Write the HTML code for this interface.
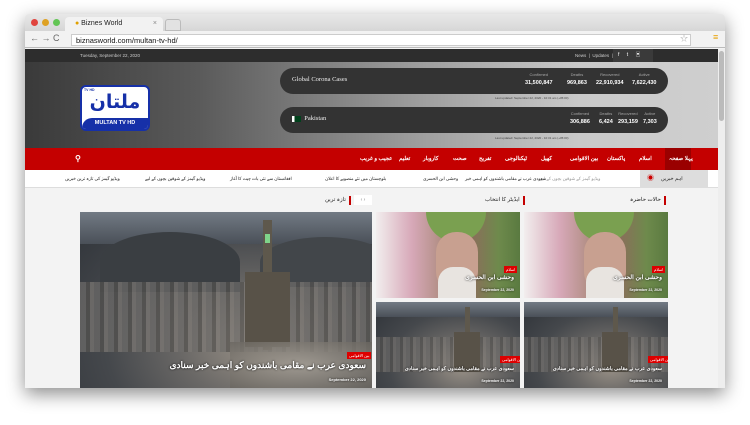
<!DOCTYPE html>
<html><head><meta charset="utf-8"><style>
*{margin:0;padding:0;box-sizing:border-box}
body{width:750px;height:425px;background:#fff;font-family:"Liberation Sans","Noto Sans CJK SC",sans-serif;position:relative;overflow:hidden}
span,div{white-space:nowrap}
.win{position:absolute;left:25px;top:14px;width:700px;height:374px;background:#f3f3f3;box-shadow:0 6px 18px rgba(0,0,0,.45);border-radius:4px 4px 0 0;overflow:hidden}
.tabs{position:absolute;left:0;top:0;width:700px;height:17px;background:linear-gradient(#e8e8e8,#d6d6d6)}
.dot{position:absolute;top:5px;width:7px;height:7px;border-radius:50%}
.tab{position:absolute;left:40px;top:3px;width:98px;height:14px;background:#f2f2f2;border-radius:4px 4px 0 0;font-size:7px;line-height:14px;padding-left:10px;color:#222}
.addr{position:absolute;left:0;top:17px;width:700px;height:17px;background:#f2f2f2;border-bottom:1px solid #bbb}
.url{position:absolute;left:46px;top:3px;width:620px;height:12px;background:#fff;border:1px solid #ccc;font-size:7.5px;line-height:11px;padding-left:4px;color:#111}
.page{position:absolute;left:0;top:35px;width:693px;height:339px;background:#f3f3f3}
.sb{position:absolute;right:0;top:35px;width:7px;height:339px;background:#eee}
.sb i{position:absolute;left:1px;top:2px;width:5px;height:70px;background:#bbb;border-radius:3px}
.topbar{position:absolute;left:0;top:0;width:693px;height:13px;background:#2d2d2d;color:#ccc;font-size:4.5px;line-height:13px}
.hdr{position:absolute;left:0;top:13px;width:693px;height:86px;background:linear-gradient(90deg,#3a3a3a 0%,#5a5a5a 25%,#9a9a9a 55%,#c9c9c9 80%,#cfcfcf 100%)}
.logo{position:absolute;left:55px;top:23px;width:70px;height:46px;background:#fff;border:2px solid #1630a8;border-radius:6px;overflow:hidden}
.cb{position:absolute;left:255px;width:388px;height:26px;background:#333;border-radius:13px;color:#eee}
.cb .t{position:absolute;left:12px;top:8px;font-family:"Liberation Serif",serif;font-size:6.5px}
.st{position:absolute;top:4px;text-align:center;font-size:4px;color:#aaa}
.st b{display:block;color:#fff;font-size:5.5px;margin-top:3px}
.nav{position:absolute;left:0;top:99px;width:693px;height:22px;background:#c40000}
.nav span{position:absolute;top:0;line-height:22px;color:#fff;font-size:5.5px;font-weight:bold}
.tick{position:absolute;left:0;top:121px;width:693px;height:18px;background:#fff;border-bottom:1px solid #ddd}
.tick span{position:absolute;top:0;line-height:18px;font-size:4.3px;color:#222}
.sec{position:absolute;top:147px;font-size:5.5px;color:#222;border-right:2px solid #c40000;padding-right:3px;line-height:9px}
.img{position:absolute;overflow:hidden}
.mec{background:radial-gradient(ellipse at 60% 75%,#9a9288 0%,#6a6866 30%,#45484c 60%,#2e3238 100%)}
.mec:before{content:"";position:absolute;left:0;top:0;right:0;height:18%;background:linear-gradient(#727a84,#4a5058)}
.mtn{position:absolute;background:#3a3e42;border-radius:50% 50% 0 0}
.tower{position:absolute;background:#5e584c}
.por{background:linear-gradient(90deg,#f2eeee 0%,#d7a8b8 25%,#a88878 50%,#8c6c5c 65%,#6e8a4c 85%,#5a7a40 100%)}
.cap{position:absolute;right:6px;color:#fff;font-weight:bold;text-align:right;text-shadow:0 0 2px #000}
.tag{position:absolute;background:#d00;color:#fff;font-size:4px;padding:1px 2px}
</style></head><body>
<div class="win">
 <div class="tabs">
  <div class="dot" style="left:6px;background:#e0443e"></div>
  <div class="dot" style="left:17px;background:#dea123"></div>
  <div class="dot" style="left:28px;background:#62c554"></div>
  <div class="tab"><span style="color:#e0a000">●</span> Biznes World <span style="position:absolute;right:6px;color:#888">×</span></div>
  <div style="position:absolute;left:140px;top:5px;width:16px;height:12px;background:#e2e2e2;border:1px solid #bbb;border-radius:3px 3px 0 0"></div>
 </div>
 <div class="addr">
  <span style="position:absolute;left:5px;top:2px;font-size:9px;color:#666">← → C</span>
  <div class="url">biznasworld.com/multan-tv-hd/</div>
  <span style="position:absolute;left:655px;top:2px;font-size:8px;color:#aaa">☆</span>
  <span style="position:absolute;left:688px;top:1px;font-size:9px;color:#e8a000">≡</span>
 </div>
 <div class="page">
  <div class="topbar"><span style="position:absolute;left:55px">Tuesday, September 22, 2020</span>
   <span style="position:absolute;left:550px">News &nbsp;| &nbsp;Updates &nbsp;| &nbsp;Help</span>
   <div style="position:absolute;left:588px;top:0;width:40px;height:13px;background:#3a3a3a;color:#fff;font-size:5px;word-spacing:6px;padding-left:5px">f t ▣</div>
  </div>
  <div class="hdr">
   <div class="logo">
    <div style="position:absolute;left:0;top:0;width:66px;height:31px;text-align:center;color:#1630a8;font-size:19px;font-weight:bold;line-height:30px;font-family:'DejaVu Sans',sans-serif">ملتان</div>
    <div style="position:absolute;left:2px;top:1px;font-size:3.5px;color:#1630a8;font-weight:bold">TV HD</div>
    <div style="position:absolute;left:0;bottom:0;width:66px;height:11px;background:#1630a8;color:#fff;font-size:5.5px;font-weight:bold;text-align:center;line-height:11px;border-radius:10px 0 0 0">MULTAN TV HD</div>
   </div>
   <div class="cb" style="top:6px"><div class="t">Global Corona Cases</div>
    <div class="st" style="left:245px">Confirmed<b>31,500,847</b></div>
    <div class="st" style="left:287px">Deaths<b>969,863</b></div>
    <div class="st" style="left:316px">Recovered<b>22,910,934</b></div>
    <div class="st" style="left:352px">Active<b>7,622,430</b></div>
   </div>
   <div style="position:absolute;left:470px;top:34px;font-size:3px;color:#444">Last updated: September 22, 2020 - 10:31 am (+05:00)</div>
   <div class="cb" style="top:45px"><div class="t"><span style="display:inline-block;width:9px;height:6px;background:linear-gradient(90deg,#fff 30%,#01411c 30%);vertical-align:middle"></span> &nbsp;Pakistan</div>
    <div class="st" style="left:290px">Confirmed<b>306,886</b></div>
    <div class="st" style="left:319px">Deaths<b>6,424</b></div>
    <div class="st" style="left:338px">Recovered<b>293,159</b></div>
    <div class="st" style="left:363px">Active<b>7,303</b></div>
   </div>
   <div style="position:absolute;left:470px;top:74px;font-size:3px;color:#444">Last updated: September 22, 2020 - 10:31 am (+05:00)</div>
  </div>
  <div class="nav">
   <div style="position:absolute;left:640px;top:0;width:26px;height:22px;background:#9a0000"></div>
   <span style="left:644px">پہلا صفحہ</span>
   <span style="left:614px">اسلام</span><span style="left:582px">پاکستان</span><span style="left:545px">بین الاقوامی</span>
   <span style="left:516px">کھیل</span><span style="left:480px">ٹیکنالوجی</span><span style="left:454px">تفریح</span>
   <span style="left:428px">صحت</span><span style="left:398px">کاروبار</span><span style="left:374px">تعلیم</span><span style="left:335px">عجیب و غریب</span>
   <span style="left:50px;font-size:8px">⚲</span>
  </div>
  <div class="tick">
   <div style="position:absolute;left:615px;top:0;width:68px;height:18px;background:#ddd"></div>
   <span style="left:622px;color:#c00;font-size:7px">◉</span><span style="left:636px;font-size:5px">اہم خبریں</span>
   <span style="left:515px;color:#999">ویڈیو گیمز کے شوقین بچوں کے لیے</span>
   <span style="left:440px">سعودی عرب نے مقامی باشندوں کو اہمی خبر</span>
   <span style="left:398px">وحشی ابن الحسری</span>
   <span style="left:300px">بلوچستان میں نئے منصوبے کا اعلان</span>
   <span style="left:205px">افغانستان سے نئی بات چیت کا آغاز</span>
   <span style="left:120px">ویڈیو گیمز کے شوقین بچوں کے لیے</span>
   <span style="left:40px">ویڈیو گیمز کی تازہ ترین خبریں</span>
  </div>
  <div class="sec" style="left:605px">حالات حاضرہ</div>
  <div class="sec" style="left:460px">ایڈیٹر کا انتخاب</div>
  <div class="sec" style="left:300px">تازہ ترین</div>
  <div style="position:absolute;left:329px;top:146px;width:18px;height:10px;background:#fff;font-size:5px;color:#888;text-align:center;line-height:10px">‹ ›</div>
  <div class="img mec" style="left:55px;top:163px;width:292px;height:176px">
   <div class="mtn" style="left:20px;top:20px;width:140px;height:60px"></div>
   <div class="mtn" style="left:180px;top:25px;width:130px;height:50px;background:#42464a"></div>
   <div style="position:absolute;left:0;top:70px;width:292px;height:70px;background:repeating-linear-gradient(90deg,#6e6c6a 0 6px,#54524f 6px 10px,#7c7874 10px 14px);opacity:.7"></div>
   <div class="tower" style="left:183px;top:8px;width:9px;height:130px"></div>
   <div style="position:absolute;left:185px;top:22px;width:5px;height:9px;background:#7fd48a"></div>
   <div class="tower" style="left:165px;top:60px;width:45px;height:75px;background:#585248"></div>
   <div style="position:absolute;left:150px;top:130px;width:142px;height:46px;background:radial-gradient(ellipse,#a8a299,#6a6660);opacity:.8"></div>
   <div class="tag" style="left:267px;top:140px">بین الاقوامی</div>
   <div class="cap" style="top:148px;font-size:9px">سعودی عرب نے مقامی باشندوں کو اہمی خبر سنادی</div>
   <div class="cap" style="top:165px;font-size:4px">September 22, 2020</div>
  </div>
  <div class="img por" style="left:351px;top:163px;width:144px;height:86px">
   <div style="position:absolute;left:50px;top:0;width:60px;height:30px;background:#7aa050;border-radius:0 0 30px 30px"></div>
   <div style="position:absolute;left:60px;top:20px;width:42px;height:60px;background:#c8a090;border-radius:20px"></div>
   <div style="position:absolute;left:62px;top:55px;width:38px;height:31px;background:#e8e4e0;border-radius:15px 15px 0 0"></div>
   <div class="tag" style="left:128px;top:54px">اسلام</div>
   <div class="cap" style="top:62px;font-size:6px">وحشی ابن الحسری</div>
   <div class="cap" style="top:76px;font-size:3.5px">September 22, 2020</div>
  </div>
  <div class="img por" style="left:499px;top:163px;width:144px;height:86px">
   <div style="position:absolute;left:50px;top:0;width:60px;height:30px;background:#7aa050;border-radius:0 0 30px 30px"></div>
   <div style="position:absolute;left:60px;top:20px;width:42px;height:60px;background:#c8a090;border-radius:20px"></div>
   <div style="position:absolute;left:62px;top:55px;width:38px;height:31px;background:#e8e4e0;border-radius:15px 15px 0 0"></div>
   <div class="tag" style="left:128px;top:54px">اسلام</div>
   <div class="cap" style="top:62px;font-size:6px">وحشی ابن الحسری</div>
   <div class="cap" style="top:76px;font-size:3.5px">September 22, 2020</div>
  </div>
  <div class="img mec" style="left:351px;top:253px;width:144px;height:86px">
   <div style="position:absolute;left:0;top:35px;width:144px;height:35px;background:repeating-linear-gradient(90deg,#6e6c6a 0 4px,#54524f 4px 7px,#7c7874 7px 10px);opacity:.6"></div>
   <div class="tower" style="left:89px;top:5px;width:5px;height:65px"></div>
   <div class="tower" style="left:78px;top:30px;width:26px;height:40px;background:#585248"></div>
   <div class="tag" style="left:124px;top:54px">بین الاقوامی</div>
   <div class="cap" style="top:64px;font-size:5px">سعودی عرب نے مقامی باشندوں کو اہمی خبر سنادی</div>
   <div class="cap" style="top:77px;font-size:3.5px">September 22, 2020</div>
  </div>
  <div class="img mec" style="left:499px;top:253px;width:144px;height:86px">
   <div style="position:absolute;left:0;top:35px;width:144px;height:35px;background:repeating-linear-gradient(90deg,#6e6c6a 0 4px,#54524f 4px 7px,#7c7874 7px 10px);opacity:.6"></div>
   <div class="tower" style="left:89px;top:5px;width:5px;height:65px"></div>
   <div class="tower" style="left:78px;top:30px;width:26px;height:40px;background:#585248"></div>
   <div class="tag" style="left:124px;top:54px">بین الاقوامی</div>
   <div class="cap" style="top:64px;font-size:5px">سعودی عرب نے مقامی باشندوں کو اہمی خبر سنادی</div>
   <div class="cap" style="top:77px;font-size:3.5px">September 22, 2020</div>
  </div>
 </div>
 <div class="sb"><i></i></div>
</div>
</body></html>
